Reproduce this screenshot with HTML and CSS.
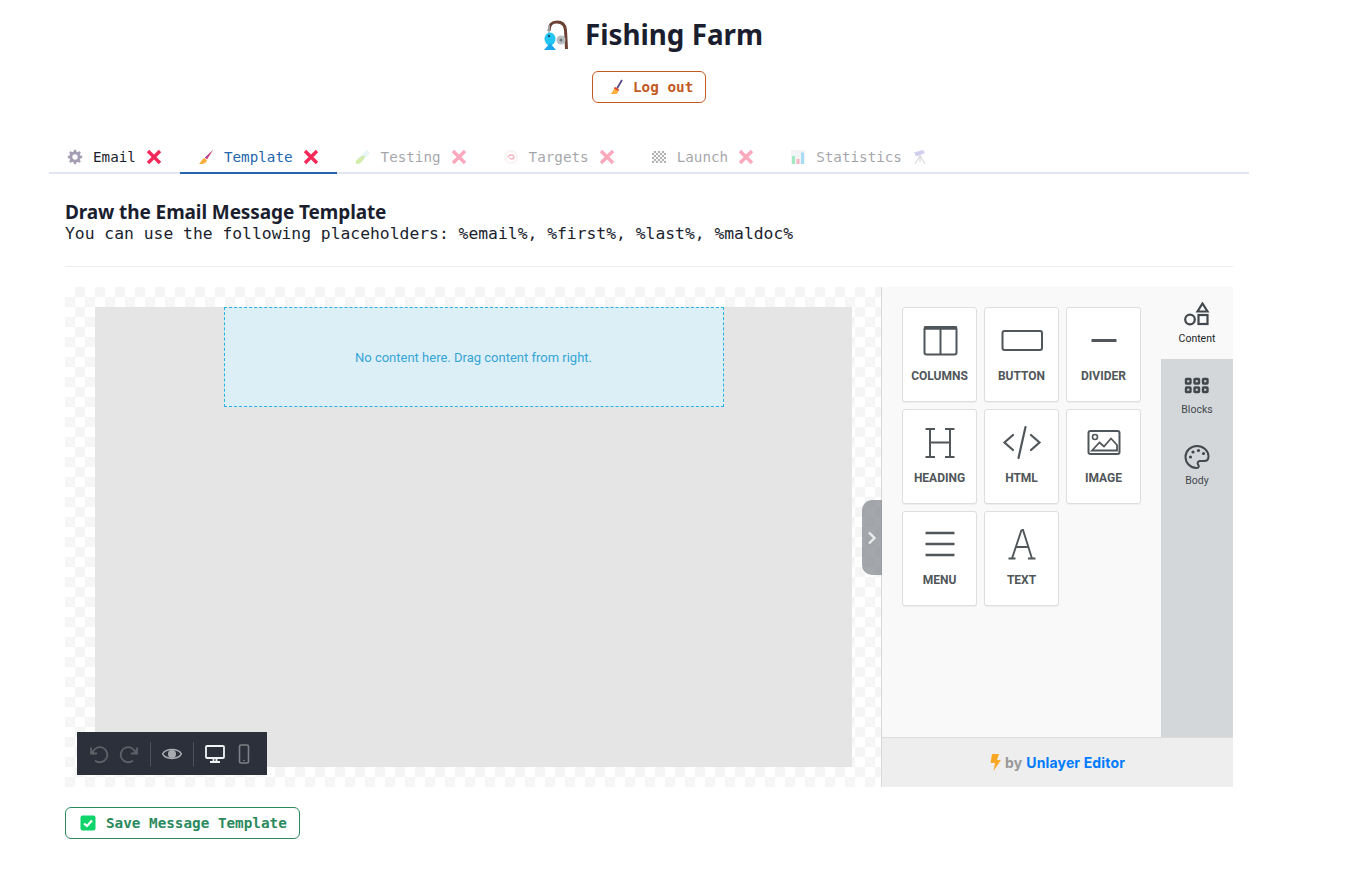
FILE: index.html
```html
<!DOCTYPE html>
<html>
<head>
<title>Fishing Farm</title>
<link rel="stylesheet" href="styles.css">
</head>
<body>
<svg class="defs" width="0" height="0">
  <symbol id="cross" viewBox="0 0 16 16">
    <path d="M2 2L14 14M14 2L2 14" fill="none" stroke="#f4295a" stroke-width="3.4"/>
  </symbol>
  <symbol id="brush" viewBox="0 0 16 16">
    <path d="M15 1L7 8.500L9 10.500Z" fill="#ec2f5b"/>
    <path d="M15 1L7 8.500L8 9.500Z" fill="#8a5cc0"/>
    <path d="M6.500 9L9 11.500C8 14.500 4 15.500 1 15C3 13.500 3.500 10 6.500 9Z" fill="#fbae3c"/>
  </symbol>
</svg>

<div class="page">
  <header class="top">
    <h1 class="site-title">
      <svg class="title-icon" viewBox="0 0 30 32" width="30" height="32">
        <path d="M8 11C8 4 11 2 16 2C22 2 24 5 24.500 10L25.500 29" fill="none" stroke="#6d4034" stroke-width="3"/>
        <path d="M8 5V14" stroke="#aab4bb" stroke-width="1.600"/>
        <ellipse cx="9" cy="19" rx="5.500" ry="6.500" fill="#22c5f3"/>
        <path d="M9 23L3 30H15Z" fill="#1aa6ea"/>
        <circle cx="8" cy="16" r="1.200" fill="#16506e"/>
        <circle cx="20" cy="20" r="4.500" fill="#b9bec2"/>
        <circle cx="20" cy="20" r="1.500" fill="#6f7478"/>
      </svg>
      <span class="title-text">Fishing Farm</span>
    </h1>
    <a class="btn btn-logout" href="#">
      <svg class="emoji" viewBox="0 0 16 16"><path d="M14 1L9 9.500" stroke="#5c4a8a" stroke-width="1.800"/><path d="M7 8L11 10.500L9 15H2.500C5 13 5.500 10.500 7 8Z" fill="#fbae3c"/><path d="M7 8L11 10.500L10.300 12L6 9.500Z" fill="#e0432f"/></svg>
      Log out
    </a>
  </header>

  <nav class="tabs">
    <a class="tab" href="#">
      <svg class="emoji" viewBox="0 0 16 16"><circle cx="8" cy="8" r="4.200" fill="none" stroke="#a49db3" stroke-width="3"/><path d="M8 .8V3.500M8 12.500V15.200M.8 8H3.500M12.500 8H15.200M2.900 2.900L4.800 4.800M11.200 11.200L13.100 13.100M13.100 2.900L11.200 4.800M4.800 11.200L2.900 13.100" stroke="#a49db3" stroke-width="2.400"/></svg>
      <span>Email</span>
      <svg class="mark"><use href="#cross"/></svg>
    </a>
    <a class="tab is-active" href="#">
      <svg class="emoji"><use href="#brush"/></svg>
      <span>Template</span>
      <svg class="mark"><use href="#cross"/></svg>
    </a>
    <a class="tab is-off" href="#">
      <svg class="emoji" viewBox="0 0 16 16"><path d="M12 1L15 4L6 13.500C4.500 15 1.500 15 1 14.500C.5 14 1 11 2.500 9.500Z" fill="#c9e8f5"/><path d="M7 7H10.500L6 13.500C4.500 15 1.500 15 1 14.500C.5 14 1 11 2.500 10.500Z" fill="#8ed11f"/></svg>
      <span>Testing</span>
      <svg class="mark"><use href="#cross"/></svg>
    </a>
    <a class="tab is-off" href="#">
      <svg class="emoji" viewBox="0 0 16 16"><circle cx="8" cy="8" r="7" fill="#f3e3e6"/><circle cx="8" cy="8" r="5" fill="#fff"/><path d="M5 8.500C5 5.500 11 5 11 8C11 10.500 7 10.500 7 8.500" fill="none" stroke="#f0486e" stroke-width="1.500"/></svg>
      <span>Targets</span>
      <svg class="mark"><use href="#cross"/></svg>
    </a>
    <a class="tab is-off" href="#">
      <svg class="emoji flag" viewBox="0 0 16 16"><rect x="1" y="2" width="14" height="12" fill="#444"/><path d="M1 2h2v2H1zM5 2h2v2H5zM9 2h2v2H9zM13 2h2v2h-2zM3 4h2v2H3zM7 4h2v2H7zM11 4h2v2h-2zM1 6h2v2H1zM5 6h2v2H5zM9 6h2v2H9zM13 6h2v2h-2zM3 8h2v2H3zM7 8h2v2H7zM11 8h2v2h-2zM1 10h2v2H1zM5 10h2v2H5zM9 10h2v2H9zM13 10h2v2h-2zM3 12h2v2H3zM7 12h2v2H7zM11 12h2v2h-2z" fill="#eee"/></svg>
      <span>Launch</span>
      <svg class="mark"><use href="#cross"/></svg>
    </a>
    <a class="tab is-off" href="#">
      <svg class="emoji" viewBox="0 0 16 16"><rect x="1" y="1" width="14" height="14" fill="#dfe3e6"/><rect x="2" y="7" width="3" height="8" fill="#22c56b"/><rect x="6.500" y="10" width="3" height="5" fill="#f0486e"/><rect x="11" y="3.500" width="3" height="11.500" fill="#28a8ea"/></svg>
      <span>Statistics</span>
      <svg class="emoji" viewBox="0 0 16 16"><path d="M2 3.500L11 1L13 4L4 7.500Z" fill="#8f8ad6"/><path d="M8 6.500L3 15M8 6.500L13 15M8 6.500V13" stroke="#8a8a9a" stroke-width="1"/></svg>
    </a>
  </nav>

  <main class="content">
    <h2 class="step-title">Draw the Email Message Template</h2>
    <p class="step-note">You can use the following placeholders: %email%, %first%, %last%, %maldoc%</p>
    <hr class="rule">

    <section class="editor">
      <div class="canvas">
        <div class="sheet">
          <div class="dropzone">No content here. Drag content from right.</div>
        </div>
        <div class="toolbar">
          <svg class="tool" viewBox="0 0 20 20"><path d="M3.500 9A7.500 7.500 0 1 1 6 16.500M2 3.500V9.500H8" fill="none" stroke="#5e6269" stroke-width="1.800"/></svg>
          <svg class="tool tool-redo" viewBox="0 0 20 20"><path d="M16.500 9A7.500 7.500 0 1 0 14 16.500M18 3.500V9.500H12" fill="none" stroke="#5e6269" stroke-width="1.800"/></svg>
          <i class="tool-sep"></i>
          <svg class="tool tool-eye" viewBox="0 0 20 20"><path d="M0.500 10C4 4 16 4 19.500 10C16 16 4 16 0.500 10Z" fill="none" stroke="#a8abb0" stroke-width="1.500"/><circle cx="10" cy="10" r="4" fill="#a8abb0"/></svg>
          <i class="tool-sep"></i>
          <svg class="tool tool-desk" viewBox="0 0 20 20"><rect x="1" y="2" width="18" height="12" rx="1" fill="none" stroke="#f1f2f3" stroke-width="1.800"/><path d="M8.500 14.500V17M11.500 14.500V17" stroke="#f1f2f3" stroke-width="1.800"/><path d="M5 18H15" stroke="#f1f2f3" stroke-width="2"/></svg>
          <svg class="tool tool-phone" viewBox="0 0 12 20"><rect x="1.500" y="1" width="9" height="18" rx="1.500" fill="none" stroke="#7d8087" stroke-width="1.600"/><circle cx="6" cy="16.500" r=".8" fill="#7d8087"/></svg>
        </div>
      </div>

      <aside class="panel">
        <a class="panel-handle" href="#">
          <svg viewBox="0 0 10 14" width="10" height="14"><path d="M2 1.500L7.500 7L2 12.500" fill="none" stroke="#eceded" stroke-width="2.400"/></svg>
        </a>
        <div class="panel-main">
          <div class="tools-pane">
            <div class="tool-grid">
              <div class="tool-card">
                <svg class="card-icon" viewBox="0 0 44 40"><rect x="6.500" y="7" width="32" height="27.500" rx="2" fill="none" stroke="#505659" stroke-width="2"/><path d="M6 8H39" stroke="#505659" stroke-width="3.500"/><path d="M22.500 8V34" stroke="#505659" stroke-width="2"/></svg>
                <span>COLUMNS</span>
              </div>
              <div class="tool-card">
                <svg class="card-icon" viewBox="0 0 44 40"><rect x="2.500" y="11" width="39.500" height="19" rx="2" fill="none" stroke="#505659" stroke-width="2"/></svg>
                <span>BUTTON</span>
              </div>
              <div class="tool-card">
                <svg class="card-icon" viewBox="0 0 44 40"><path d="M9.500 20.500H34.500" stroke="#505659" stroke-width="3"/></svg>
                <span>DIVIDER</span>
              </div>
              <div class="tool-card">
                <svg class="card-icon" viewBox="0 0 44 40"><path d="M7.500 7H17M27 7H36.500M7.500 35H17M27 35H36.500M12 7V35M32 7V35M12 20.500H32" fill="none" stroke="#505659" stroke-width="2"/></svg>
                <span>HEADING</span>
              </div>
              <div class="tool-card">
                <svg class="card-icon" viewBox="0 0 44 40"><path d="M13 13L4.500 20.500L13 28M31 13L39.500 20.500L31 28M25.500 5L18.500 36" fill="none" stroke="#505659" stroke-width="2.200" stroke-linecap="round"/></svg>
                <span>HTML</span>
              </div>
              <div class="tool-card">
                <svg class="card-icon" viewBox="0 0 44 40"><rect x="6.500" y="9" width="31" height="23" rx="2" fill="none" stroke="#505659" stroke-width="2"/><circle cx="13" cy="15" r="2.500" fill="none" stroke="#505659" stroke-width="1.600"/><path d="M10 28.500L17.500 20.500L22 24.500L29 16.500L35 23V28.500Z" fill="none" stroke="#505659" stroke-width="1.800"/></svg>
                <span>IMAGE</span>
              </div>
              <div class="tool-card">
                <svg class="card-icon" viewBox="0 0 44 40"><path d="M7.500 9H36.500M7.500 20H36.500M7.500 31H36.500" stroke="#505659" stroke-width="2.400"/></svg>
                <span>MENU</span>
              </div>
              <div class="tool-card">
                <svg class="card-icon" viewBox="0 0 44 40"><path d="M21.500 6L12 34.500M21.500 6H23L32 34.500M15.500 23H29M8.500 34.500H15.500M28 34.500H35.500" fill="none" stroke="#505659" stroke-width="1.900"/></svg>
                <span>TEXT</span>
              </div>
            </div>
          </div>
          <div class="side-tabs">
            <a class="side-tab is-current" href="#">
              <svg viewBox="0 0 26 24" width="26" height="24"><path d="M18.500 1.500L23.500 9.500H13.500Z" fill="none" stroke="#43484d" stroke-width="2.200"/><circle cx="6" cy="17.500" r="4.800" fill="none" stroke="#43484d" stroke-width="2.200"/><rect x="14.500" y="13" width="9" height="9" fill="none" stroke="#43484d" stroke-width="2.200"/></svg>
              <span>Content</span>
            </a>
            <a class="side-tab" href="#">
              <svg viewBox="0 0 26 24" width="26" height="24"><g fill="none" stroke="#43484d" stroke-width="2.400"><rect x="2" y="5" width="4.500" height="4.500" rx=".5"/><rect x="10.500" y="5" width="4.500" height="4.500" rx=".5"/><rect x="19" y="5" width="4.500" height="4.500" rx=".5"/><rect x="2" y="13.500" width="4.500" height="4.500" rx=".5"/><rect x="10.500" y="13.500" width="4.500" height="4.500" rx=".5"/><rect x="19" y="13.500" width="4.500" height="4.500" rx=".5"/></g></svg>
              <span>Blocks</span>
            </a>
            <a class="side-tab" href="#">
              <svg viewBox="0 0 26 24" width="26" height="24"><path d="M13 1C6.500 1 1.500 6 1.500 12C1.500 18 6.500 23 12.500 23C15.500 23 15 20.500 14 19.500C13 18 14 16 16 16H20C23 16 24.500 14 24.500 11.500C24.500 5.500 19 1 13 1Z" fill="none" stroke="#43484d" stroke-width="2"/><g fill="#43484d"><circle cx="6.500" cy="12" r="1.600"/><circle cx="9" cy="7" r="1.600"/><circle cx="14.500" cy="5.500" r="1.600"/><circle cx="19.500" cy="8.500" r="1.600"/></g></svg>
              <span>Body</span>
            </a>
          </div>
        </div>
        <div class="panel-foot">
          <svg viewBox="0 0 11 17" width="11" height="17"><path d="M2 0H9L7 6H11L3.500 17L5 9H0.500Z" fill="#f9a825"/></svg>
          <span class="foot-by">by</span>
          <a class="foot-link" href="#">Unlayer Editor</a>
        </div>
      </aside>
    </section>

    <a class="btn btn-save" href="#">
      <svg class="emoji" viewBox="0 0 16 16"><rect x=".5" y=".5" width="15" height="15" rx="2" fill="#0fd46c"/><path d="M4 8.500L7 11L12 5.500" fill="none" stroke="#fff" stroke-width="2.200"/></svg>
      Save Message Template
    </a>
  </main>
</div>
</body>
</html>
```

FILE: styles.css
```css
* {
  box-sizing: border-box;
}
body {
  margin: 0;
  background: #fff;
  color: #1a1e2e;
  font-family: "Noto Sans", sans-serif;
}
a {
  text-decoration: none;
}
.defs {
  position: absolute;
}
.page {
  width: 1298px;
  padding: 0 49px;
}

/* header */
.top {
  display: flex;
  flex-direction: column;
  align-items: center;
}
.site-title {
  display: flex;
  align-items: center;
  justify-content: center;
  gap: 14px;
  height: 71px;
  margin: 0;
  padding-left: 6px;
  font-size: 27.8px;
  font-weight: 700;
}
.title-icon {
  flex: none;
}
.title-text {
  margin-top: -4px;
}
.btn {
  display: inline-flex;
  align-items: center;
  gap: 9px;
  height: 32px;
  background: #fff;
  border: 1px solid;
  border-radius: 6px;
  font-family: "DejaVu Sans Mono", monospace;
  font-size: 14.3px;
  font-weight: 700;
}
.btn-logout {
  width: 114px;
  padding-left: 15px;
  color: #c25a22;
  border-color: #c25a22;
}
.btn-save {
  width: 235px;
  margin-top: 20px;
  padding-left: 14px;
  gap: 10px;
  color: #2a8a5d;
  border-color: #2a8a5d;
}
.emoji {
  flex: none;
  width: 16px;
  height: 16px;
}
.mark {
  flex: none;
  width: 16px;
  height: 16px;
}

/* tabs */
.tabs {
  display: flex;
  height: 33px;
  margin-top: 38px;
  border-bottom: 2px solid #e1e6f0;
  font-family: "DejaVu Sans Mono", monospace;
  font-size: 14.25px;
}
.tab {
  display: flex;
  align-items: center;
  gap: 10px;
  height: 33px;
  padding: 0 18px;
  color: #1a1e2e;
  border-bottom: 2px solid transparent;
}
.tab.is-active {
  color: #2366b0;
  border-bottom-color: #2366b0;
}
.tab.is-off {
  opacity: .4;
}

/* step */
.content {
  padding: 0 16px;
}
.step-title {
  margin: 26px 0 0;
  font-size: 19px;
  line-height: 24px;
  font-weight: 700;
  letter-spacing: -.1px;
}
.step-note {
  margin: 0;
  font-family: "DejaVu Sans Mono", monospace;
  font-size: 16.35px;
  line-height: 20px;
}
.rule {
  height: 1px;
  margin: 22px 0 20px;
  background: #ededed;
  border: 0;
}

/* editor */
.editor {
  display: flex;
  height: 500px;
  font-family: Roboto, sans-serif;
}
.canvas {
  position: relative;
  flex: 1;
  padding: 20px 29px 20px 30px;
  background-color: #fff;
  background-image: url("data:image/svg+xml,%3Csvg xmlns='http://www.w3.org/2000/svg' width='20' height='20'%3E%3Cpath d='M10 0h10v10H10zM0 10h10v10H0z' fill='%23f5f5f5'/%3E%3Cpath d='M1 11l8 8' stroke='%23fff' stroke-width='.7'/%3E%3C/svg%3E");
}
.sheet {
  height: 460px;
  background: #e5e5e5;
}
.dropzone {
  width: 500px;
  height: 100px;
  margin: 0 auto;
  display: flex;
  align-items: center;
  justify-content: center;
  background: #ddeff6;
  border: 1px dashed #27b2e6;
  color: #35a5d6;
  font-size: 13px;
}
.toolbar {
  position: absolute;
  left: 12px;
  top: 445px;
  display: flex;
  align-items: center;
  width: 190px;
  height: 43px;
  padding-left: 12px;
  background: #2b303b;
}
.tool {
  width: 20px;
  height: 20px;
  flex: none;
}
.tool-redo {
  margin-left: 10px;
}
.tool-sep {
  width: 1px;
  height: 24px;
  margin: 0 11px;
  background: #4c515b;
}
.tool-phone {
  width: 12px;
  margin-left: 13px;
}

/* right panel */
.panel {
  position: relative;
  display: flex;
  flex-direction: column;
  width: 352px;
  background: #f9f9f9;
  border-left: 1px solid #d9d9d9;
}
.panel-handle {
  position: absolute;
  left: -20px;
  top: 213px;
  display: flex;
  align-items: center;
  justify-content: center;
  width: 20px;
  height: 75px;
  background: rgba(125, 130, 135, .7);
  border-radius: 10px 0 0 10px;
}
.panel-main {
  display: flex;
  flex: 1;
  min-height: 0;
}
.tools-pane {
  flex: 1;
  padding: 20px;
}
.tool-grid {
  display: grid;
  grid-template-columns: repeat(3, 75px);
  grid-auto-rows: 95px;
  gap: 7px;
}
.tool-card {
  display: flex;
  flex-direction: column;
  align-items: center;
  padding-top: 13px;
  background: #fff;
  border: 1px solid #dedede;
  border-radius: 3px;
  box-shadow: 0 1px 1px rgba(0, 0, 0, .05);
  color: #505659;
  font-size: 12px;
  font-weight: 700;
  line-height: 14px;
}
.card-icon {
  width: 44px;
  height: 40px;
  margin: -1px 0 1px;
  flex: none;
}
.tool-card span {
  margin-top: 8px;
}
.side-tabs {
  display: flex;
  flex-direction: column;
  width: 72px;
  background: #d4d7da;
  color: #43484d;
  font-size: 10.5px;
}
.side-tab {
  display: flex;
  flex-direction: column;
  align-items: center;
  height: 71px;
  padding-top: 15px;
  color: #43484d;
}
.side-tab span {
  margin-top: 5px;
}
.side-tab.is-current {
  height: 72px;
  background: #f9f9f9;
  color: #22272b;
}
.side-tab.is-current span {
  margin-top: 6px;
}
.panel-foot {
  display: flex;
  align-items: center;
  justify-content: center;
  gap: 4px;
  height: 50px;
  background: #eee;
  border-top: 1px solid #dcdcdc;
  font-family: Inter, sans-serif;
  font-size: 14px;
  font-weight: 700;
  letter-spacing: .15px;
}
.foot-by {
  color: #999;
}
.foot-link {
  color: #007bff;
}
```
